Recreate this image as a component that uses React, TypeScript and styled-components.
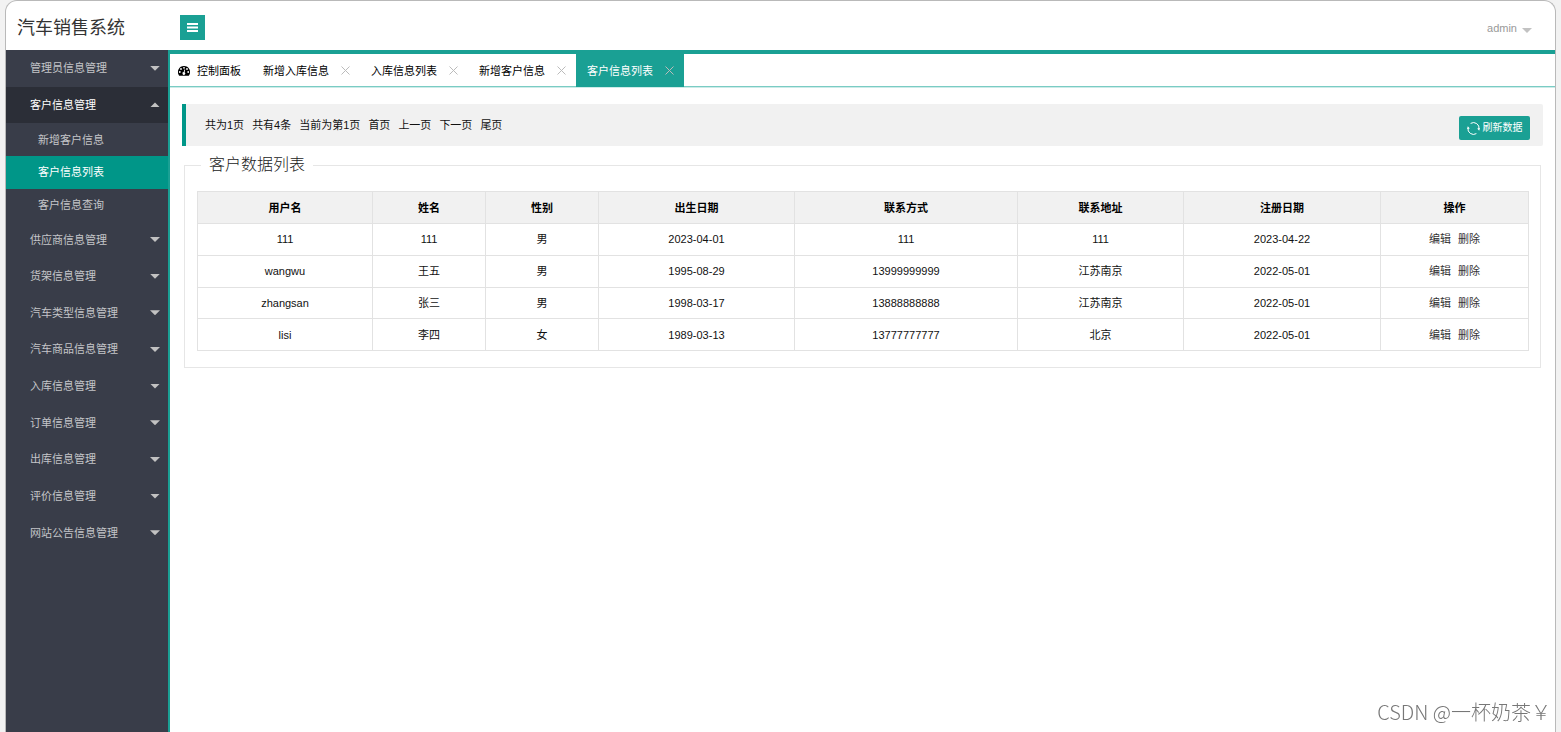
import React from "react";
import styled, { createGlobalStyle } from "styled-components";

const TEAL = "#1aa094";

const GlobalStyle = createGlobalStyle`
  * { box-sizing: border-box; }
  body {
    margin: 0;
    background: #f2f2f2;
    color: #111;
    font-family: "Liberation Sans", "Noto Sans CJK SC", sans-serif;
    font-size: 11px;
    line-height: 16px;
  }
  button { font: inherit; border: 0; padding: 0; cursor: pointer; }
  a { color: inherit; text-decoration: none; }
  ul { list-style: none; margin: 0; padding: 0; }
`;

const Shell = styled.div`
  display: flex;
  flex-direction: column;
  min-height: 100vh;
  margin: 0 5px;
  background: #fff;
  border: 1px solid #b9b9b9;
  border-bottom: 0;
  border-radius: 12px 12px 0 0;
`;

const Header = styled.header`
  display: flex;
  align-items: center;
  height: 49px;
  padding: 4px 23px 0 11px;
`;

const Brand = styled.h1`
  width: 163px;
  margin: 0;
  color: #333;
  font-size: 18px;
  font-weight: 400;
  line-height: 24px;
`;

const MenuToggle = styled.button`
  display: grid;
  place-items: center;
  width: 25px;
  height: 25px;
  background: ${TEAL};
  color: #fff;
`;

const UserMenu = styled.button`
  display: flex;
  align-items: center;
  gap: 5px;
  margin-left: auto;
  background: none;
  color: #999;
`;

const Caret = styled.span<{ $up?: boolean; $low?: boolean }>`
  width: 10px;
  height: 5px;
  margin-top: ${(p) => (p.$low ? "6px" : "0")};
  background: #c2c2c2;
  clip-path: ${(p) =>
    p.$up ? "polygon(50% 0, 100% 100%, 0 100%)" : "polygon(0 0, 100% 0, 50% 100%)"};
`;

const Body = styled.div`
  display: flex;
  flex: 1;
`;

const Sidebar = styled.aside`
  flex: none;
  width: 162px;
  background: #393d49;
`;

const Menu = styled.ul`
  display: flex;
  flex-direction: column;
  min-height: 501px;
`;

const MenuItem = styled.li<{ $span: number; $basis: number }>`
  display: flex;
  flex-direction: column;
  flex: ${(p) => p.$span} 0 ${(p) => p.$basis}px;
`;

const GroupButton = styled.button<{ $open?: boolean }>`
  display: flex;
  flex: 1 0 36px;
  align-items: center;
  justify-content: space-between;
  padding: 0 8px 0 24px;
  background: ${(p) => (p.$open ? "#2b2e37" : "transparent")};
  color: ${(p) => (p.$open ? "#fff" : "#c4c5c8")};
`;

const SubMenu = styled.ul`
  display: flex;
  flex: 3 0 96px;
  flex-direction: column;
`;

const SubItem = styled.li`
  display: flex;
  flex: 1 0 32px;
`;

const SubLink = styled.a<{ $active?: boolean }>`
  display: flex;
  flex: 1;
  align-items: center;
  padding-left: 32px;
  background: ${(p) => (p.$active ? "#009688" : "transparent")};
  color: ${(p) => (p.$active ? "#fff" : "#c4c5c8")};
`;

const Content = styled.main`
  flex: 1;
  min-width: 0;
  border-top: 4px solid ${TEAL};
  border-left: 2px solid ${TEAL};
`;

const TabBar = styled.nav`
  display: flex;
  height: 33px;
  border-bottom: 1px solid #7accc4;
  box-shadow: 0 1px 0 #cdebe8;
`;

const Tab = styled.div<{ $active?: boolean }>`
  display: flex;
  align-items: center;
  gap: 12px;
  height: 33px;
  padding: 0 10px 0 11px;
  background: ${(p) => (p.$active ? TEAL : "transparent")};
  color: ${(p) => (p.$active ? "#fff" : "#000")};
`;

const HomeTab = styled(Tab)`
  gap: 7px;
  padding: 0 11px 0 8px;
`;

const CloseButton = styled.button`
  display: grid;
  width: 9px;
  height: 9px;
  background: none;
  color: #bbb;
`;

const Page = styled.div`
  padding: 17px 12px;
`;

const Notice = styled.section`
  display: flex;
  align-items: center;
  justify-content: space-between;
  height: 42px;
  padding: 0 13px 0 19px;
  background: #f1f1f1;
  border-left: 4px solid #009688;
  border-radius: 0 2px 2px 0;
`;

const Pager = styled.div`
  display: flex;
  gap: 8px;
`;

const RefreshButton = styled.button`
  display: flex;
  align-items: center;
  justify-content: center;
  gap: 3px;
  width: 71px;
  height: 24px;
  margin-top: 6px;
  background: ${TEAL};
  border-radius: 2px;
  color: #fff;
  font-size: 10px;
`;

const Fieldset = styled.fieldset`
  min-width: 0;
  margin: 7px 2px 0;
  padding: 14px 12px 16px;
  border: 1px solid #e6e6e6;
`;

const Legend = styled.legend`
  margin-left: 4px;
  padding: 0 8px;
  color: #222;
  font-size: 16px;
  font-weight: 300;
  line-height: 24px;
`;

const Table = styled.table`
  width: 100%;
  height: 160px;
  border-collapse: collapse;
  table-layout: fixed;
  text-align: center;
`;

const Cell = styled.td`
  padding: 0;
  border: 1px solid #e2e2e2;
`;

const HeadCell = styled.th`
  height: 32px;
  padding: 0;
  background: #f1f1f1;
  border: 1px solid #e2e2e2;
  color: #000;
  font-weight: 700;
`;

const Actions = styled.div`
  display: flex;
  justify-content: center;
  gap: 7px;
  color: #333;
`;

const Watermark = styled.div`
  position: fixed;
  right: 10px;
  bottom: 6px;
  color: #777;
  font-family: "Noto Sans CJK SC", sans-serif;
  font-size: 20px;
  font-weight: 300;
  line-height: 28px;
`;

const BarsIcon = () => (
  <svg width="11" height="9" viewBox="0 0 11 9" fill="currentColor" aria-hidden="true">
    <path d="M0 0h11v2H0zM0 3.5h11v2H0zM0 7h11v2H0z" />
  </svg>
);

const DashboardIcon = () => (
  <svg width="12" height="10" viewBox="0 0 12 10" aria-hidden="true">
    <path d="M6 0a6 6 0 0 0-5 9.4q.2.4.6.4h8.8q.4 0 .6-.4A6 6 0 0 0 6 0z" fill="#000" />
    <g fill="#fff">
      <circle cx="1.8" cy="6" r=".9" />
      <circle cx="3" cy="3" r=".9" />
      <circle cx="6" cy="1.8" r=".9" />
      <circle cx="9" cy="3" r=".9" />
      <circle cx="10.2" cy="6" r=".9" />
      <path d="M6.4 3.4l.8.2-.6 2.6a1.4 1.4 0 1 1-.9-.2z" />
    </g>
  </svg>
);

const CloseIcon = () => (
  <svg width="9" height="9" viewBox="0 0 9 9" stroke="currentColor" fill="none" aria-hidden="true">
    <path d="M.5.5l8 8M8.5.5l-8 8" />
  </svg>
);

const RefreshIcon = () => (
  <svg width="13" height="13" viewBox="0 0 13 13" stroke="currentColor" fill="none" aria-hidden="true">
    <path d="M3.6 1.4A5.6 5.6 0 0 1 12 7.2M9.4 11.6A5.6 5.6 0 0 1 1 5.8" />
    <path d="M10.2 6.4L12.9 6 12.2 8.8zM2.8 6.6L.1 7 .8 4.2z" fill="currentColor" stroke="none" />
  </svg>
);

type Group = { title: string; children?: string[] };

const groups: Group[] = [
  { title: "管理员信息管理" },
  { title: "客户信息管理", children: ["新增客户信息", "客户信息列表", "客户信息查询"] },
  { title: "供应商信息管理" },
  { title: "货架信息管理" },
  { title: "汽车类型信息管理" },
  { title: "汽车商品信息管理" },
  { title: "入库信息管理" },
  { title: "订单信息管理" },
  { title: "出库信息管理" },
  { title: "评价信息管理" },
  { title: "网站公告信息管理" },
];

const tabs = ["新增入库信息", "入库信息列表", "新增客户信息", "客户信息列表"];
const current = "客户信息列表";

const columns = [
  { name: "用户名", width: 175 },
  { name: "姓名", width: 113 },
  { name: "性别", width: 113 },
  { name: "出生日期", width: 196 },
  { name: "联系方式", width: 223 },
  { name: "联系地址", width: 166 },
  { name: "注册日期", width: 197 },
  { name: "操作", width: 148 },
];

const customers = [
  ["111", "111", "男", "2023-04-01", "111", "111", "2023-04-22"],
  ["wangwu", "王五", "男", "1995-08-29", "13999999999", "江苏南京", "2022-05-01"],
  ["zhangsan", "张三", "男", "1998-03-17", "13888888888", "江苏南京", "2022-05-01"],
  ["lisi", "李四", "女", "1989-03-13", "13777777777", "北京", "2022-05-01"],
];

export default function App() {
  return (
    <>
      <GlobalStyle />
      <Shell>
        <Header>
          <Brand>汽车销售系统</Brand>
          <MenuToggle type="button" aria-label="菜单">
            <BarsIcon />
          </MenuToggle>
          <UserMenu type="button">
            admin
            <Caret $low />
          </UserMenu>
        </Header>
        <Body>
          <Sidebar>
            <Menu>
              {groups.map(({ title, children }) => (
                <MenuItem key={title} $span={children ? 4 : 1} $basis={children ? 132 : 36}>
                  <GroupButton type="button" $open={!!children} aria-expanded={!!children}>
                    {title}
                    <Caret $up={!!children} />
                  </GroupButton>
                  {children && (
                    <SubMenu>
                      {children.map((name) => (
                        <SubItem key={name}>
                          <SubLink href="#" $active={name === current}>
                            {name}
                          </SubLink>
                        </SubItem>
                      ))}
                    </SubMenu>
                  )}
                </MenuItem>
              ))}
            </Menu>
          </Sidebar>
          <Content>
            <TabBar>
              <HomeTab>
                <DashboardIcon />
                <a href="#">控制面板</a>
              </HomeTab>
              {tabs.map((name) => (
                <Tab key={name} $active={name === current}>
                  <a href="#">{name}</a>
                  <CloseButton type="button" aria-label={`关闭${name}`}>
                    <CloseIcon />
                  </CloseButton>
                </Tab>
              ))}
            </TabBar>
            <Page>
              <Notice>
                <Pager>
                  <span>共为1页</span>
                  <span>共有4条</span>
                  <span>当前为第1页</span>
                  <a href="#">首页</a>
                  <a href="#">上一页</a>
                  <a href="#">下一页</a>
                  <a href="#">尾页</a>
                </Pager>
                <RefreshButton type="button">
                  <RefreshIcon />
                  刷新数据
                </RefreshButton>
              </Notice>
              <Fieldset>
                <Legend>客户数据列表</Legend>
                <Table>
                  <colgroup>
                    {columns.map((c) => (
                      <col key={c.name} width={c.width} />
                    ))}
                  </colgroup>
                  <thead>
                    <tr>
                      {columns.map((c) => (
                        <HeadCell key={c.name} scope="col">
                          {c.name}
                        </HeadCell>
                      ))}
                    </tr>
                  </thead>
                  <tbody>
                    {customers.map((row) => (
                      <tr key={row[0]}>
                        {row.map((value, i) => (
                          <Cell key={i}>{value}</Cell>
                        ))}
                        <Cell>
                          <Actions>
                            <a href="#">编辑</a>
                            <a href="#">删除</a>
                          </Actions>
                        </Cell>
                      </tr>
                    ))}
                  </tbody>
                </Table>
              </Fieldset>
            </Page>
          </Content>
        </Body>
      </Shell>
      <Watermark>CSDN @一杯奶茶￥</Watermark>
    </>
  );
}
